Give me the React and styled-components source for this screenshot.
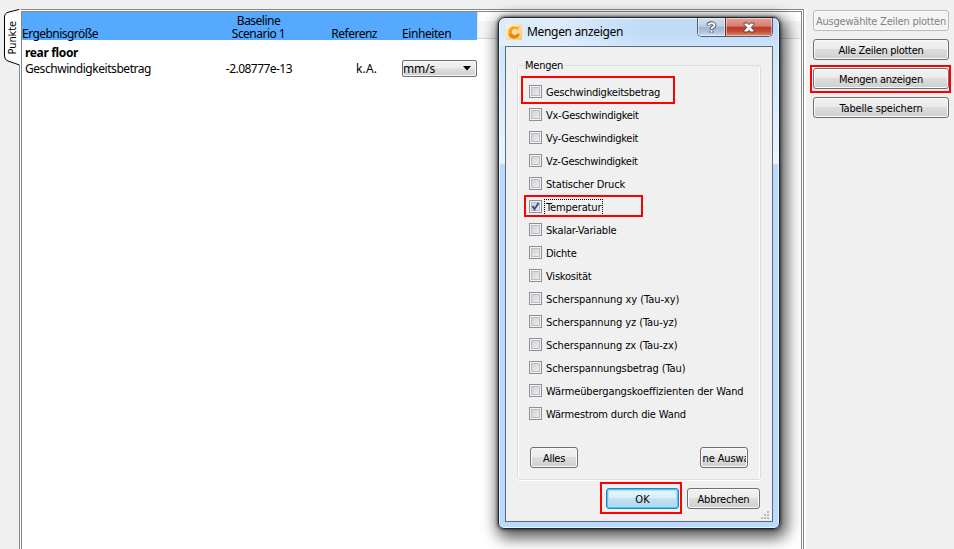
import React from "react";
import styled, { createGlobalStyle, css } from "styled-components";

const GlobalStyle = createGlobalStyle`
  * { box-sizing: border-box; }
  body { margin: 0; background: #f0f0f0; }
`;

const tahoma = css`
  font-family: "DejaVu Sans Condensed", "DejaVu Sans", sans-serif;
  font-stretch: condensed;
  font-size: 11px;
`;
const segoe = css`
  font-family: "Noto Sans", sans-serif;
  font-size: 12px;
`;

const Page = styled.div`
  position: relative;
  display: flex;
  width: 954px;
  height: 549px;
  overflow: hidden;
  background: #f0f0f0;
  color: #000;
  white-space: nowrap;
  ${segoe}
`;

const Text = styled.span`
  letter-spacing: ${(p) => p.$ls || 0}px;
`;

/* Left tab strip */
const TabStrip = styled.div`
  width: 19px;
  flex: none;
`;
const Tab = styled.div`
  position: absolute;
  left: 4px;
  top: 9px;
  z-index: 1;
  width: 17px;
  height: 57px;
  display: flex;
  align-items: center;
  justify-content: center;
  svg { position: absolute; inset: 0; }
`;
const TabLabel = styled.span`
  position: relative;
  ${tahoma}
  line-height: 14px;
  letter-spacing: -0.1px;
  writing-mode: vertical-rl;
  transform: rotate(180deg);
  margin: 1px 0 0 1px;
`;

/* Result table */
const Pane = styled.div`
  width: 787px;
  flex: none;
  margin-top: 9px;
  padding-right: 2px;
  background: #fff;
`;
const Frame = styled.div`
  height: 560px;
  padding: 1px;
  border: 1px solid #828790;
  background: #fff;
`;
const Sheet = styled.div`
  height: 100%;
  border: 1px solid #828790;
`;
const columns = css`
  display: grid;
  grid-template-columns: 191px 91px 73px 100px;
`;
const Header = styled.div`
  display: flex;
  height: 28px;
`;
const HeaderCells = styled.div`
  ${columns}
  width: 455px;
  height: 28px;
  align-items: end;
  background: #55aaff;
  line-height: 13px;
`;
const HeaderRest = styled.div`
  flex: 1;
  height: 27px;
  border-bottom: 1px solid #d5d5d5;
  border-left: 1px solid #e3e5e8;
  background: linear-gradient(#fff 0 9px, #f5f6f8 9px);
`;
const HeadCell = styled.div`
  display: flex;
  flex-direction: column;
  align-items: ${(p) => p.$align || "flex-start"};
  padding-left: ${(p) => p.$left || 0}px;
`;
const GroupRow = styled.div`
  height: 16px;
  margin-top: 5px;
  padding-left: 3px;
  line-height: 16px;
  font-weight: 700;
`;
const DataRow = styled.div`
  ${columns}
  height: 18px;
  margin-top: -1px;
  line-height: 17px;
`;
const Cell = styled.div`
  text-align: ${(p) => p.$align || "left"};
  padding-left: ${(p) => p.$left || 0}px;
  padding-right: ${(p) => p.$right || 0}px;
`;
const UnitSelect = styled.div`
  display: flex;
  align-items: center;
  justify-content: space-between;
  width: 75px;
  height: 17px;
  padding: 0 5px 0 0;
  border: 1px solid #707070;
  border-radius: 2px;
  box-shadow: inset 0 0 0 1px #f8f8f8;
  background: linear-gradient(#f2f2f2, #ebebeb 48%, #dddddd 52%, #cfcfcf);
  line-height: 15px;
`;

/* Buttons */
const Button = styled.button`
  ${tahoma}
  display: flex;
  align-items: center;
  justify-content: center;
  width: ${(p) => p.$w}px;
  height: 21px;
  flex: none;
  padding: 1px 0 0;
  border: 1px solid #707070;
  border-radius: 3px;
  box-shadow: inset 0 0 0 1px #fafafa;
  background: linear-gradient(#f2f2f2, #ebebeb 48%, #dddddd 50%, #cfcfcf);
  color: #000;
  white-space: nowrap;
  ${(p) => p.$disabled && css`
    border-color: #b6babf;
    background: #f4f4f4;
    color: #838383;
  `}
  ${(p) => p.$primary && css`
    border-color: #3c7fb1;
    box-shadow: inset 0 0 0 1px #3fcbf5, inset 0 0 0 2px #a5e4fa;
    background: linear-gradient(#e7f4fb, #ddeff9 48%, #c3e1f2 50%, #b2d6ec);
  `}
`;
const Clip = styled.span`
  display: flex;
  width: 43px;
  overflow: hidden;
  letter-spacing: -0.1px;
`;
const Sidebar = styled.aside`
  display: flex;
  flex-direction: column;
  gap: 8px;
  padding: 10px 0 0 7px;
`;
const Marked = styled.div`
  position: relative;
`;
const Highlight = styled.div`
  position: absolute;
  left: ${(p) => p.$x}px;
  top: ${(p) => p.$y}px;
  width: ${(p) => p.$w}px;
  height: ${(p) => p.$h}px;
  border: 2px solid #f00;
  pointer-events: none;
`;

/* Dialog */
const Dialog = styled.section`
  position: absolute;
  left: 498px;
  top: 17px;
  z-index: 2;
  width: 282px;
  height: 512px;
  padding: 0 6px 6px;
  border: 1px solid #1c242c;
  border-radius: 7px 7px 6px 6px;
  background:
    linear-gradient(100deg, rgba(255,255,255,.45) 0 22%, rgba(255,255,255,0) 50%) 0 0 / 100% 28px no-repeat,
    linear-gradient(#c3dcf6 0, #bfdaf7 14px, #cfe4fb 30px, #eaf4ff 145px, #b9dafc 147px, #b9dafc 100%);
  box-shadow: inset 0 0 0 1px rgba(240, 249, 255, .85), 0 0 3px 1px rgba(0,0,0,.5), 3px 5px 15px 4px rgba(0,0,0,.65);
`;
const TitleBar = styled.header`
  display: flex;
  align-items: flex-start;
  height: 28px;
`;
const AppIcon = styled.svg`
  margin: 6px 5px 0 0;
  flex: none;
`;
const Title = styled.h1`
  flex: 1;
  margin: 5px 0 0;
  font-size: 12px;
  line-height: 18px;
  font-weight: 400;
  letter-spacing: -0.33px;
`;
const WindowButtons = styled.div`
  display: flex;
  width: 76px;
  height: 19px;
  border: 1px solid #4d6079;
  border-top: 0;
  border-radius: 0 0 5px 5px;
  overflow: hidden;
`;
const WindowButton = styled.div`
  display: flex;
  align-items: center;
  justify-content: center;
  width: ${(p) => (p.$close ? 47 : 27)}px;
  box-shadow: inset 0 0 0 1px rgba(255,255,255,.45);
  border-left: ${(p) => (p.$close ? "1px solid #6b2f2c" : "0")};
  background: ${(p) => p.$close
    ? "linear-gradient(#e3a297, #d67c6d 46%, #b83b2a 50%, #c54c35 75%, #e08d6a)"
    : "linear-gradient(#d3dfed, #c0cfe2 46%, #9fb4cd 50%, #b1c5dd 80%, #cfe2f6)"};
`;
const Client = styled.div`
  position: relative;
  width: 268px;
  height: 476px;
  padding: 11px 12px 0 11px;
  border: 1px solid #5a6b7d;
  background: #f0f0f0;
  ${tahoma}
`;
const GroupBox = styled.fieldset`
  width: 243px;
  height: 422px;
  margin: 0;
  padding: 0 12px;
  border: 1px solid #d5dfe5;
  border-radius: 3px;
  box-shadow: inset 1px 0 0 #fff, inset -1px 0 0 #fff, 0 1px 0 #fff;
`;
const Legend = styled.legend`
  height: 15px;
  margin-left: -6px;
  padding: 0 2px 0 1px;
  line-height: 15px;
  letter-spacing: -0.25px;
`;
const Options = styled.div`
  display: flex;
  flex-direction: column;
  margin-top: 7px;
`;
const Option = styled.label`
  position: relative;
  display: flex;
  align-items: center;
  height: 23px;
  margin-left: -1px;
`;
const Box = styled.span`
  position: relative;
  width: 13px;
  height: 13px;
  flex: none;
  padding: 2px;
  border: 1px solid #8e8f8f;
  background: linear-gradient(135deg, #c4c9d1, #f6f6f6);
  box-shadow: inset 0 0 0 1px #f4f4f4, inset 0 0 0 2px #b9bdc4;
  svg { position: absolute; left: 0; top: 0; }
`;
const OptionLabel = styled.span`
  margin: 1px 0 0 2px;
  padding: 1px 2px 0;
  line-height: 16px;
  letter-spacing: ${(p) => p.$ls}px;
  outline: ${(p) => (p.$focus ? "1px dotted #000" : "none")};
  outline-offset: -1px;
`;
const GroupActions = styled.div`
  display: flex;
  justify-content: space-between;
  width: 218px;
  margin-top: 22px;
`;
const Footer = styled.footer`
  display: flex;
  justify-content: flex-end;
  gap: 8px;
  margin-top: 8px;
`;
const Grip = styled.svg`
  position: absolute;
  right: 3px;
  bottom: 2px;
`;

const options = [
  { label: "Geschwindigkeitsbetrag", ls: -0.22, mark: [-8, -4, 154, 28] },
  { label: "Vx-Geschwindigkeit", ls: -0.28 },
  { label: "Vy-Geschwindigkeit", ls: -0.28 },
  { label: "Vz-Geschwindigkeit", ls: -0.3 },
  { label: "Statischer Druck", ls: -0.2 },
  { label: "Temperatur", ls: -0.12, checked: true, mark: [-5, 0, 119, 22] },
  { label: "Skalar-Variable", ls: -0.17 },
  { label: "Dichte", ls: -0.25 },
  { label: "Viskosität", ls: -0.2 },
  { label: "Scherspannung xy (Tau-xy)", ls: -0.05 },
  { label: "Scherspannung yz (Tau-yz)", ls: -0.07 },
  { label: "Scherspannung zx (Tau-zx)", ls: -0.07 },
  { label: "Scherspannungsbetrag (Tau)", ls: -0.11 },
  { label: "Wärmeübergangskoeffizienten der Wand", ls: -0.11 },
  { label: "Wärmestrom durch die Wand", ls: -0.15 },
];

function ResultTable() {
  return (
    <Pane>
      <Frame>
        <Sheet>
          <Header>
            <HeaderCells>
              <HeadCell><Text $ls={-0.54}>Ergebnisgröße</Text></HeadCell>
              <HeadCell $align="center">
                <Text $ls={-0.52}>Baseline</Text>
                <Text $ls={-0.52}>Scenario 1</Text>
              </HeadCell>
              <HeadCell $align="flex-end"><Text $ls={-0.5}>Referenz</Text></HeadCell>
              <HeadCell $left={25}><Text $ls={-0.42}>Einheiten</Text></HeadCell>
            </HeaderCells>
            <HeaderRest />
          </Header>
          <GroupRow><Text $ls={-0.35}>rear floor</Text></GroupRow>
          <DataRow>
            <Cell $left={3}><Text $ls={-0.45}>Geschwindigkeitsbetrag</Text></Cell>
            <Cell $align="right" $right={12}><Text $ls={-0.54}>-2.08777e-13</Text></Cell>
            <Cell $align="right"><Text $ls={0.1}>k.A.</Text></Cell>
            <Cell $left={25}>
              <UnitSelect>
                <Text $ls={-0.1}>mm/s</Text>
                <svg width="8" height="5" viewBox="0 0 8 5"><path d="M0 0h8L4 4.5z" /></svg>
              </UnitSelect>
            </Cell>
          </DataRow>
        </Sheet>
      </Frame>
    </Pane>
  );
}

function QuantityDialog() {
  return (
    <Dialog>
      <TitleBar>
        <AppIcon width="17" height="16" viewBox="-1 0 17 16">
          <defs>
            <linearGradient id="tile" x2="1" y2="1">
              <stop stopColor="#fff3dc" /><stop offset="1" stopColor="#fbc56a" />
            </linearGradient>
          </defs>
          <rect width="16" height="16" fill="url(#tile)" />
          <path d="M13.500 2 11.800 5.800 9.500 4.800 7.300 5 6 7v2.500l2 1.800 2.200-.2 1.300-1.500 2.300.6-2 3.300-3.600 1.300-3.700-1.200L2.300 10.500V6.300L4.600 3.200 8 2.300l3 .9z" fill="#f5a31c" />
          <path d="M6 9.500 8 11.300l2.200-.2 1.300-1.500 2.300.6-2 3.300-3.600 1.300-3.700-1.200L2.300 10.500z" fill="#dd8a14" />
        </AppIcon>
        <Title>Mengen anzeigen</Title>
        <WindowButtons>
          <WindowButton>
            <svg width="11" height="13" viewBox="0 0 11 13" fill="none">
              <path d="M2.500 4.600C2.500 1.500 8.500 1.500 8.500 4.400 8.500 6.200 5.500 6 5.500 8.400M5.500 9.800v2" stroke="#47525f" strokeWidth="3.800" />
              <path d="M2.500 4.200C2.500 1.500 8.500 1.500 8.500 4.400 8.500 6.200 5.500 6 5.500 8M5.500 9.500v2" stroke="#fff" strokeWidth="1.900" />
            </svg>
          </WindowButton>
          <WindowButton $close>
            <svg width="12" height="11" viewBox="0 0 12 11">
              <path d="M1 1h3.500L6 2.700 7.500 1H11v1.500L8.300 5.500 11 8.500V10H7.500L6 8.300 4.500 10H1V8.500l2.700-3L1 2.500z" fill="#fff" stroke="#53404a" />
            </svg>
          </WindowButton>
        </WindowButtons>
      </TitleBar>
      <Client>
        <GroupBox>
          <Legend>Mengen</Legend>
          <Options>
            {options.map((o) => (
              <Option key={o.label}>
                <Box>
                  {o.checked && (
                    <svg width="11" height="11" viewBox="0 0 11 11" fill="none">
                      <path d="M2.500 5 4.500 8.200 8.600 2" stroke="#3d4f97" strokeWidth="2" />
                    </svg>
                  )}
                </Box>
                <OptionLabel $ls={o.ls} $focus={o.checked}>{o.label}</OptionLabel>
                {o.mark && <Highlight $x={o.mark[0]} $y={o.mark[1]} $w={o.mark[2]} $h={o.mark[3]} />}
              </Option>
            ))}
          </Options>
          <GroupActions>
            <Button $w={48}><Text $ls={-0.3}>Alles</Text></Button>
            <Button $w={48}><Clip>ne Auswa</Clip></Button>
          </GroupActions>
        </GroupBox>
        <Footer>
          <Marked>
            <Button $w={73} $primary>OK</Button>
            <Highlight $x={-6} $y={-6} $w={82} $h={32} />
          </Marked>
          <Button $w={73}><Text $ls={-0.15}>Abbrechen</Text></Button>
        </Footer>
        <Grip width="8" height="8" viewBox="0 0 8 8" fill="#b8b8b8">
          <path d="M6 0h2v2H6zM3 3h2v2H3zM6 3h2v2H6zM0 6h2v2H0zM3 6h2v2H3zM6 6h2v2H6z" />
        </Grip>
      </Client>
    </Dialog>
  );
}

export default function App() {
  return (
    <>
      <GlobalStyle />
      <Page>
        <TabStrip>
          <Tab>
            <svg width="17" height="57" viewBox="0 0 17 57">
              <path d="M17 .5H15L5 3Q.5 4 .5 8V47Q.5 51 4 52L15.500 56H17z" fill="#fff" />
              <path d="M15 .5 5 3Q.5 4 .5 8V47Q.5 51 4 52L15.500 56" fill="none" stroke="#000" />
            </svg>
            <TabLabel>Punkte</TabLabel>
          </Tab>
        </TabStrip>
        <ResultTable />
        <Sidebar>
          <Button $w={136} $disabled><Text $ls={-0.23}>Ausgewählte Zeilen plotten</Text></Button>
          <Button $w={136}><Text $ls={-0.3}>Alle Zeilen plotten</Text></Button>
          <Marked>
            <Button $w={136}><Text $ls={-0.25}>Mengen anzeigen</Text></Button>
            <Highlight $x={-3} $y={-3} $w={141} $h={28} />
          </Marked>
          <Button $w={136}><Text $ls={-0.15}>Tabelle speichern</Text></Button>
        </Sidebar>
        <QuantityDialog />
      </Page>
    </>
  );
}
